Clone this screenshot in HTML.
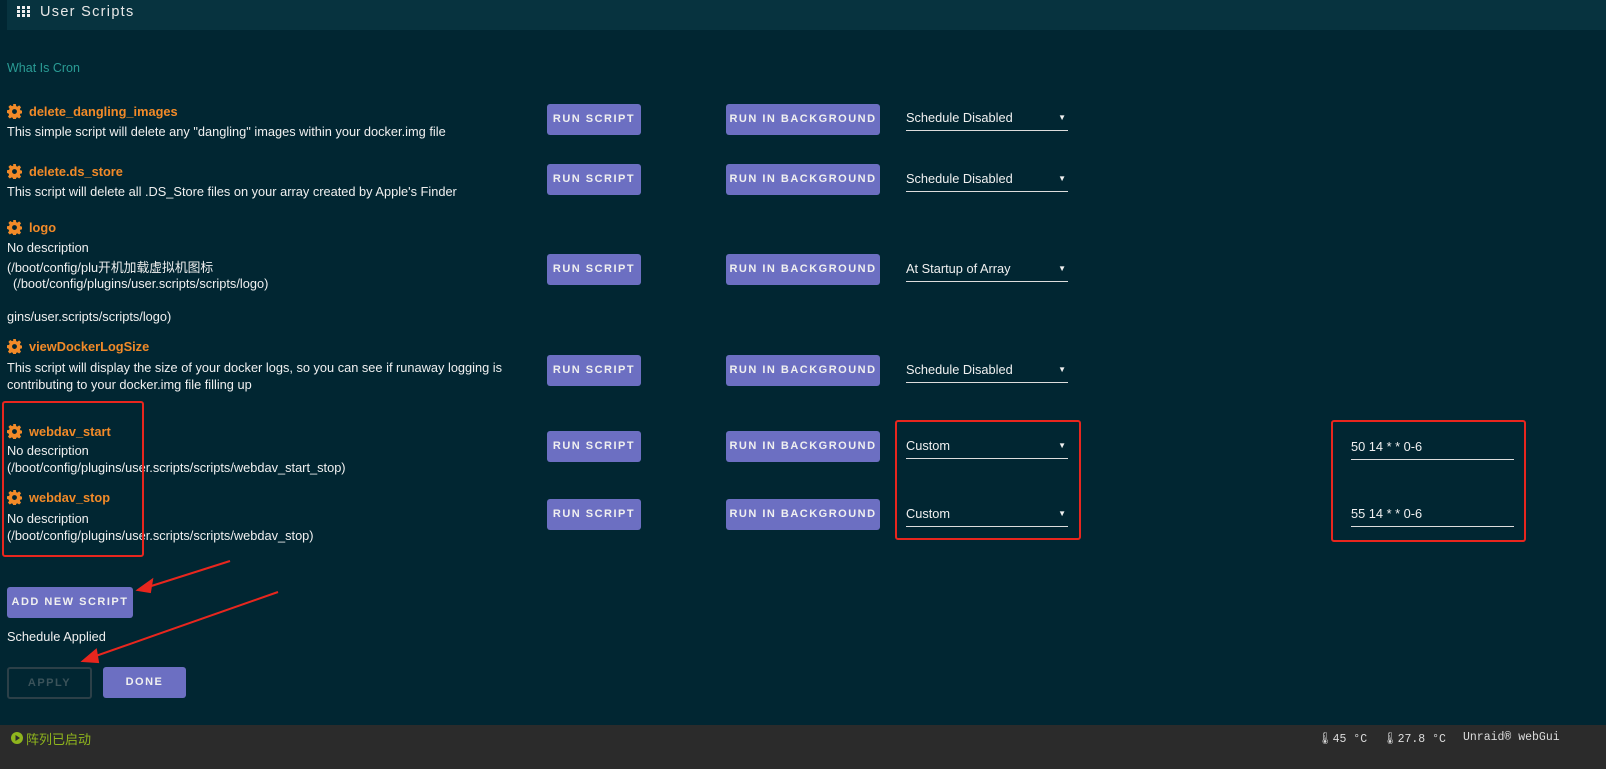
<!DOCTYPE html>
<html><head><meta charset="utf-8"><style>
body{margin:0;width:1606px;height:769px;background:#012632;font-family:"Liberation Sans","Noto Sans CJK SC",sans-serif;color:#f0f0f0;position:relative;overflow:hidden;font-size:12.8px}
.a{position:absolute;white-space:nowrap}
.hdr{position:absolute;left:7px;top:0;width:1599px;height:30px;background:#07333f}
.t{color:#f28a28;font-weight:bold;font-size:12.8px}
.g{display:inline-block;width:15px;height:15px;vertical-align:-3px;margin-right:7px}
.btn{position:absolute;background:#6c6fc2;border-radius:3px;color:#f0f0f0;font-weight:bold;font-size:11px;letter-spacing:1.5px;text-align:center;line-height:31px;height:31px}
.sel{position:absolute;width:162px;border-bottom:1px solid #ddd;height:22px;font-size:12.8px;line-height:20px}
.sel:after{content:"▼";position:absolute;right:2px;font-size:8px;top:0}
.inp{position:absolute;width:163px;border-bottom:1px solid #ddd;height:22px;font-size:12.8px;line-height:20px}
.red{position:absolute;border:2px solid #e8261e;border-radius:3px}
.ft{position:absolute;left:0;top:725px;width:1606px;height:44px;background:#2b2b2b}
</style></head><body>
<svg width="0" height="0" style="position:absolute"><defs><symbol id="cog" viewBox="0 0 16 16"><path fill="#f28a28" fill-rule="evenodd" d="M6.6 0h2.8l.4 2.2 1.3.6 1.9-1.3 2 2-1.3 1.9.6 1.3 2.2.4v2.8l-2.2.4-.6 1.3 1.3 1.9-2 2-1.9-1.3-1.3.6-.4 2.2H6.6l-.4-2.2-1.3-.6-1.9 1.3-2-2 1.3-1.9-.6-1.3L0 9.4V6.6l2.2-.4.6-1.3-1.3-1.9 2-2 1.9 1.3 1.3-.6zM8 5.4a2.6 2.6 0 1 0 0 5.2 2.6 2.6 0 1 0 0-5.2z"/></symbol></defs></svg>
<div class="hdr"></div>
<div class="a" style="left:17px;top:6px;width:13px;height:11px;background:repeating-linear-gradient(90deg,#eee 0 3px,transparent 3px 5px)"></div>
<div class="a" style="left:17px;top:9px;width:13px;height:1px;background:#07333f"></div>
<div class="a" style="left:17px;top:13px;width:13px;height:1px;background:#07333f"></div>
<div class="a" style="left:40px;top:4px;font-size:14.5px;letter-spacing:1.3px;color:#e8e8e8">User Scripts</div>
<div class="a" style="left:7px;top:61px;color:#2a9c95;font-size:12.5px">What Is Cron</div>

<div class="a t" style="left:7px;top:104px"><svg class="g"><use href="#cog"/></svg>delete_dangling_images</div>
<div class="a" style="left:7px;top:124px">This simple script will delete any "dangling" images within your docker.img file</div>
<div class="a t" style="left:7px;top:164px"><svg class="g"><use href="#cog"/></svg>delete.ds_store</div>
<div class="a" style="left:7px;top:184px">This script will delete all .DS_Store files on your array created by Apple's Finder</div>
<div class="a t" style="left:7px;top:220px"><svg class="g"><use href="#cog"/></svg>logo</div>
<div class="a" style="left:7px;top:240px">No description</div>
<div class="a" style="left:7px;top:257px">(/boot/config/plu开机加载虚拟机图标</div>
<div class="a" style="left:13px;top:276px">(/boot/config/plugins/user.scripts/scripts/logo)</div>
<div class="a" style="left:7px;top:309px">gins/user.scripts/scripts/logo)</div>
<div class="a t" style="left:7px;top:339px"><svg class="g"><use href="#cog"/></svg>viewDockerLogSize</div>
<div class="a" style="left:7px;top:360px">This script will display the size of your docker logs, so you can see if runaway logging is</div>
<div class="a" style="left:7px;top:377px">contributing to your docker.img file filling up</div>
<div class="a t" style="left:7px;top:424px"><svg class="g"><use href="#cog"/></svg>webdav_start</div>
<div class="a" style="left:7px;top:443px">No description</div>
<div class="a" style="left:7px;top:460px">(/boot/config/plugins/user.scripts/scripts/webdav_start_stop)</div>
<div class="a t" style="left:7px;top:490px"><svg class="g"><use href="#cog"/></svg>webdav_stop</div>
<div class="a" style="left:7px;top:511px">No description</div>
<div class="a" style="left:7px;top:528px">(/boot/config/plugins/user.scripts/scripts/webdav_stop)</div>

<div class="btn" style="left:547px;top:104px;width:94px">RUN SCRIPT</div><div class="btn" style="left:726px;top:104px;width:154px">RUN IN BACKGROUND</div><div class="sel" style="left:906px;top:108px">Schedule Disabled</div>
<div class="btn" style="left:547px;top:164px;width:94px">RUN SCRIPT</div><div class="btn" style="left:726px;top:164px;width:154px">RUN IN BACKGROUND</div><div class="sel" style="left:906px;top:169px">Schedule Disabled</div>
<div class="btn" style="left:547px;top:254px;width:94px">RUN SCRIPT</div><div class="btn" style="left:726px;top:254px;width:154px">RUN IN BACKGROUND</div><div class="sel" style="left:906px;top:259px">At Startup of Array</div>
<div class="btn" style="left:547px;top:355px;width:94px">RUN SCRIPT</div><div class="btn" style="left:726px;top:355px;width:154px">RUN IN BACKGROUND</div><div class="sel" style="left:906px;top:360px">Schedule Disabled</div>
<div class="btn" style="left:547px;top:431px;width:94px">RUN SCRIPT</div><div class="btn" style="left:726px;top:431px;width:154px">RUN IN BACKGROUND</div><div class="sel" style="left:906px;top:436px">Custom</div>
<div class="btn" style="left:547px;top:499px;width:94px">RUN SCRIPT</div><div class="btn" style="left:726px;top:499px;width:154px">RUN IN BACKGROUND</div><div class="sel" style="left:906px;top:504px">Custom</div>
<div class="inp" style="left:1351px;top:437px">50 14 * * 0-6</div>
<div class="inp" style="left:1351px;top:504px">55 14 * * 0-6</div>

<div class="red" style="left:2px;top:401px;width:138px;height:152px"></div>
<div class="red" style="left:895px;top:420px;width:182px;height:116px"></div>
<div class="red" style="left:1331px;top:420px;width:191px;height:118px"></div>

<div class="btn" style="left:7px;top:587px;width:126px">ADD NEW SCRIPT</div>
<div class="a" style="left:7px;top:629px">Schedule Applied</div>
<div class="btn" style="left:7px;top:667px;width:81px;height:28px;line-height:28px;background:transparent;border:2px solid #2c4048;color:#3b535a">APPLY</div>
<div class="btn" style="left:103px;top:667px;width:83px;height:31px">DONE</div>
<svg class="a" style="left:0;top:0" width="1606" height="725"><g stroke="#e8261e" stroke-width="2" fill="#e8261e"><line x1="230" y1="561" x2="145" y2="588"/><polygon points="138,590 152,580 150,592"/><line x1="278" y1="592" x2="90" y2="658"/><polygon points="83,661 96,650 98,662"/></g></svg>

<div class="ft"></div>
<svg class="a" style="left:11px;top:732px" width="12" height="12"><circle cx="6" cy="6" r="6" fill="#8fb51d"/><polygon points="4.5,3 9,6 4.5,9" fill="#2b2b2b"/></svg>
<div class="a" style="left:26px;top:729px;color:#8fb51d;font-size:13px">阵列已启动</div>
<div class="a" style="left:1318px;top:731px;font-family:'Liberation Mono',monospace;font-size:11.5px;color:#ddd">🌡45 °C</div>
<div class="a" style="left:1383px;top:731px;font-family:'Liberation Mono',monospace;font-size:11.5px;color:#ddd">🌡27.8 °C</div>
<div class="a" style="left:1463px;top:731px;font-family:'Liberation Mono',monospace;font-size:11.5px;color:#ddd">Unraid® webGui</div>
</body></html>
